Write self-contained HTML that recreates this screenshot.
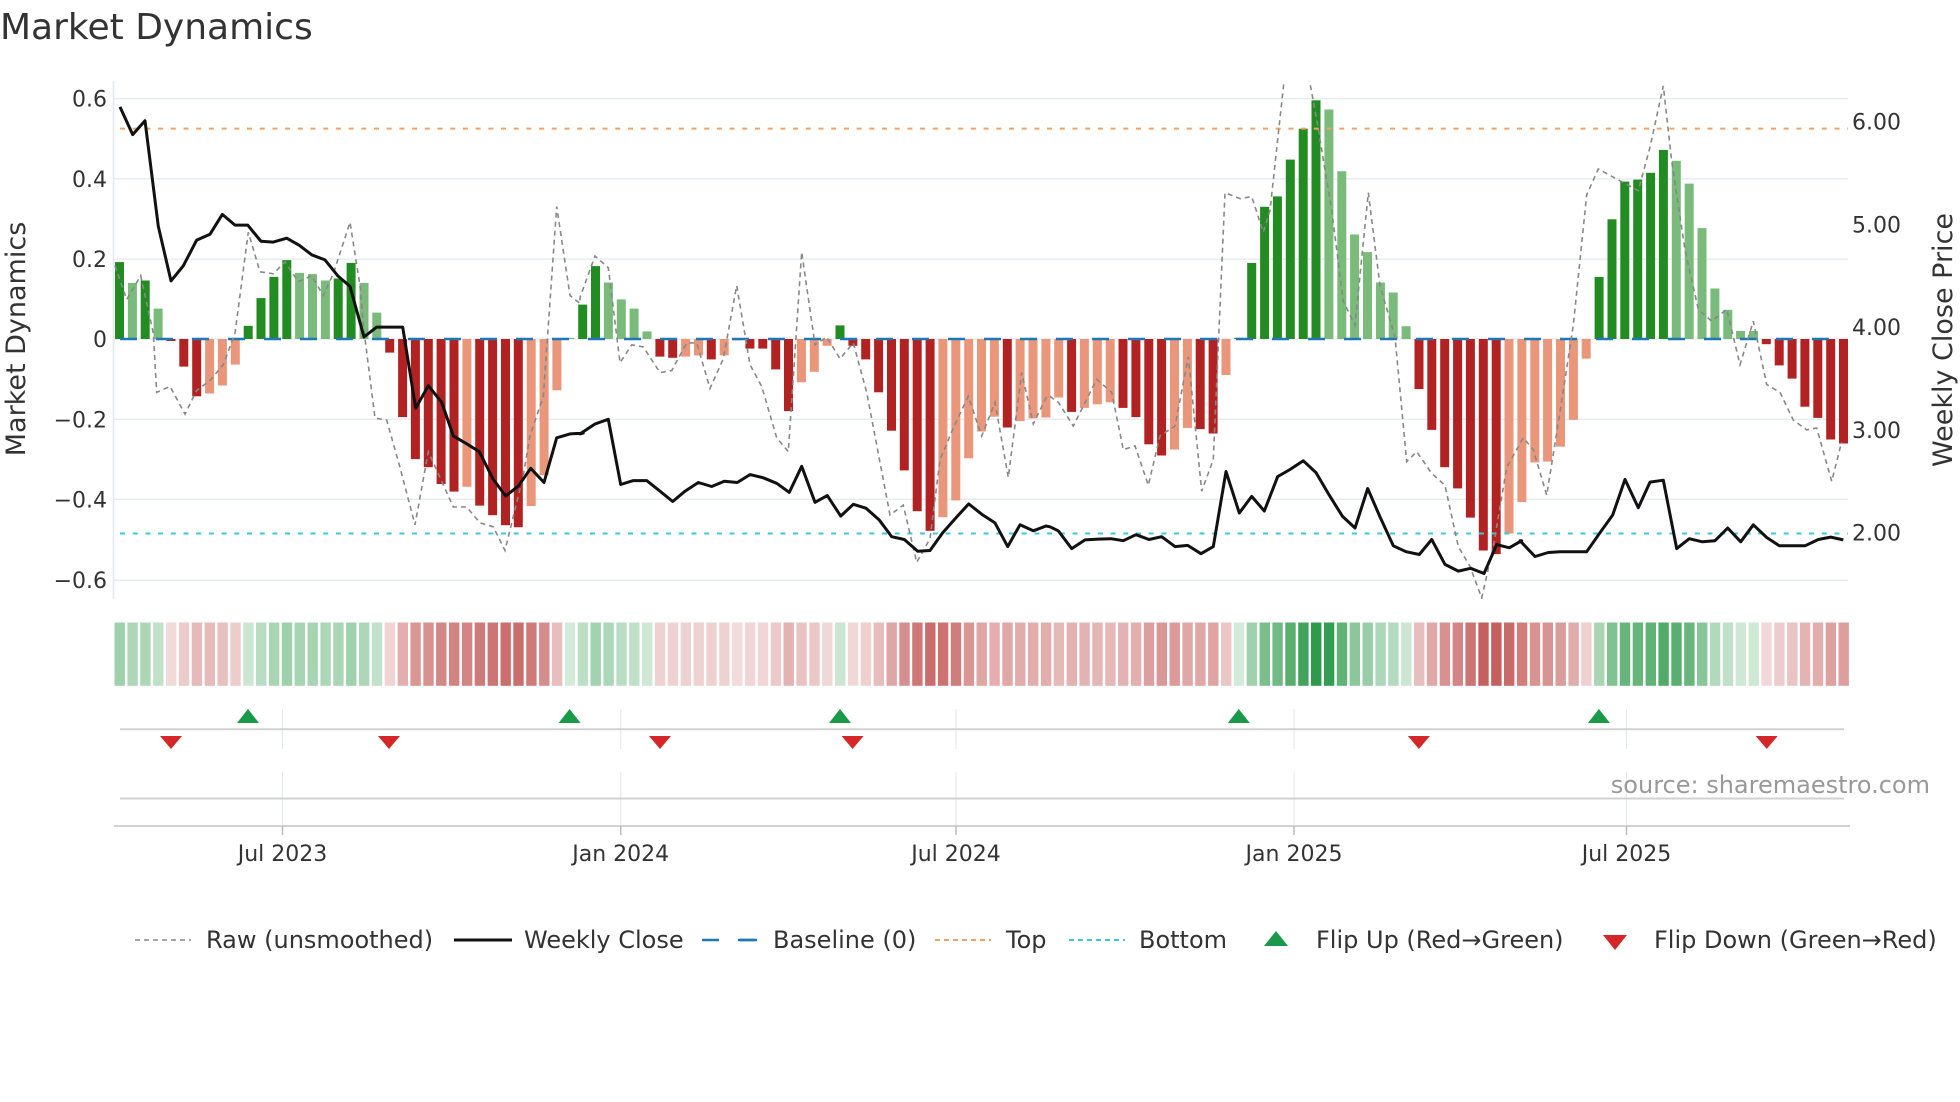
<!DOCTYPE html>
<html><head><meta charset="utf-8">
<style>
html,body{margin:0;padding:0;background:#fff;}
svg{display:block;font-family:"DejaVu Sans","Liberation Sans",sans-serif;}
</style></head>
<body>
<svg id="s" width="1960" height="1102" viewBox="0 0 1960 1102" xmlns="http://www.w3.org/2000/svg">
<rect width="1960" height="1102" fill="#fff"/>
<text x="0" y="39" font-size="36" fill="#333">Market Dynamics</text>
<g id="grid" stroke="#e8ecf2" stroke-width="1.5">
<line x1="113" y1="98.6" x2="1848" y2="98.6"/>
<line x1="113" y1="178.9" x2="1848" y2="178.9"/>
<line x1="113" y1="259.1" x2="1848" y2="259.1"/>
<line x1="113" y1="339" x2="1848" y2="339"/>
<line x1="113" y1="419.3" x2="1848" y2="419.3"/>
<line x1="113" y1="499.3" x2="1848" y2="499.3"/>
<line x1="113" y1="580.2" x2="1848" y2="580.2"/>
</g>
<line x1="113.5" y1="81" x2="113.5" y2="599" stroke="#e3e7ee" stroke-width="1.5"/>
<g font-size="22" fill="#333" text-anchor="end">
<text x="107" y="106.6">0.6</text>
<text x="107" y="186.9">0.4</text>
<text x="107" y="267.1">0.2</text>
<text x="107" y="347">0</text>
<text x="107" y="427.3">−0.2</text>
<text x="107" y="507.3">−0.4</text>
<text x="107" y="588.2">−0.6</text>
</g>
<g font-size="22" fill="#333">
<text x="1852" y="129.5">6.00</text>
<text x="1852" y="232.3">5.00</text>
<text x="1852" y="335">4.00</text>
<text x="1852" y="437.9">3.00</text>
<text x="1852" y="540.7">2.00</text>
</g>
<text transform="translate(25,339) rotate(-90)" text-anchor="middle" font-size="27" fill="#333">Market Dynamics</text>
<text transform="translate(1952,340) rotate(-90)" text-anchor="middle" font-size="27" fill="#333">Weekly Close Price</text>
<defs><clipPath id="cp"><rect x="113" y="81" width="1736" height="518"/></clipPath></defs>
<g id="bars"></g>
<line x1="120" y1="128.6" x2="1848" y2="128.6" stroke="#f4a261" stroke-width="2" stroke-dasharray="5,7.7"/>
<line x1="120" y1="533.5" x2="1848" y2="533.5" stroke="#3cc8dc" stroke-width="2" stroke-dasharray="5,7.7"/>
<line x1="120" y1="339" x2="1848" y2="339" stroke="#1f77b4" stroke-width="2.5" stroke-dasharray="17,19"/>
<g clip-path="url(#cp)">
<polyline id="raw" fill="none" stroke="#888" stroke-width="1.6" stroke-dasharray="5,4"/>
<polyline id="close" fill="none" stroke="#111" stroke-width="3" stroke-linejoin="round"/>
</g>
<g id="heat"></g>
<g stroke="#e6e9ef" stroke-width="1.2">
<line x1="282.5" y1="709" x2="282.5" y2="749"/><line x1="620.7" y1="709" x2="620.7" y2="749"/><line x1="956" y1="709" x2="956" y2="749"/><line x1="1294" y1="709" x2="1294" y2="749"/><line x1="1626.5" y1="709" x2="1626.5" y2="749"/>
<line x1="282.5" y1="772" x2="282.5" y2="826"/><line x1="620.7" y1="772" x2="620.7" y2="826"/><line x1="956" y1="772" x2="956" y2="826"/><line x1="1294" y1="772" x2="1294" y2="826"/><line x1="1626.5" y1="772" x2="1626.5" y2="826"/>
</g>
<line x1="120" y1="729.3" x2="1844" y2="729.3" stroke="#d2d2d2" stroke-width="2"/>
<line x1="120" y1="798.5" x2="1844" y2="798.5" stroke="#d2d2d2" stroke-width="2"/>
<line x1="114" y1="826" x2="1850" y2="826" stroke="#d2d2d2" stroke-width="2"/>
<g stroke="#bbb" stroke-width="1.5">
<line x1="282.5" y1="826" x2="282.5" y2="835"/><line x1="620.7" y1="826" x2="620.7" y2="835"/><line x1="956" y1="826" x2="956" y2="835"/><line x1="1294" y1="826" x2="1294" y2="835"/><line x1="1626.5" y1="826" x2="1626.5" y2="835"/>
</g>
<g id="marks"></g>
<g font-size="22" fill="#333" text-anchor="middle">
<text x="282.5" y="861">Jul 2023</text>
<text x="620.7" y="861">Jan 2024</text>
<text x="956" y="861">Jul 2024</text>
<text x="1294" y="861">Jan 2025</text>
<text x="1626.5" y="861">Jul 2025</text>
</g>
<text x="1930" y="793" text-anchor="end" font-size="24" fill="#999">source: sharemaestro.com</text>
<g font-size="24" fill="#333">
<line x1="135" y1="940" x2="191" y2="940" stroke="#888" stroke-width="1.6" stroke-dasharray="5,4"/>
<text x="206" y="948">Raw (unsmoothed)</text>
<line x1="454" y1="940" x2="512" y2="940" stroke="#111" stroke-width="3"/>
<text x="524" y="948">Weekly Close</text>
<line x1="702" y1="940" x2="757" y2="940" stroke="#1f77b4" stroke-width="2.5" stroke-dasharray="17,19"/>
<line x1="740" y1="940" x2="757" y2="940" stroke="#1f77b4" stroke-width="2.5"/>
<text x="773" y="948">Baseline (0)</text>
<line x1="935" y1="940" x2="991" y2="940" stroke="#f4a261" stroke-width="2" stroke-dasharray="5,4"/>
<text x="1006" y="948">Top</text>
<line x1="1069" y1="940" x2="1125" y2="940" stroke="#3cc8dc" stroke-width="2" stroke-dasharray="5,4"/>
<text x="1139" y="948">Bottom</text>
<polygon points="1264,946 1288,946 1276,931" fill="#1a9a48"/>
<text x="1316" y="948">Flip Up (Red→Green)</text>
<polygon points="1603,935 1627,935 1615,950" fill="#d62728"/>
<text x="1654" y="948">Flip Down (Green→Red)</text>
</g>
</svg>
<script>
(function(){
var NS="http://www.w3.org/2000/svg";
function el(t,a,p){var e=document.createElementNS(NS,t);for(var k in a)e.setAttribute(k,a[k]);p.appendChild(e);return e;}
var V=[0.192,0.14,0.146,0.076,-0.005,-0.069,-0.143,-0.136,-0.116,-0.064,0.033,0.102,0.155,0.197,0.165,0.162,0.146,0.151,0.19,0.14,0.066,-0.034,-0.195,-0.30,-0.32,-0.362,-0.381,-0.369,-0.416,-0.44,-0.465,-0.47,-0.417,-0.34,-0.128,0.003,0.086,
0.182,0.141,0.099,0.076,0.019,-0.044,-0.047,-0.044,-0.041,-0.051,-0.041,-0.003,-0.024,-0.024,-0.076,-0.18,-0.108,-0.082,-0.017,0.034,-0.017,-0.051,-0.133,-0.229,-0.328,-0.43,-0.479,-0.445,-0.403,-0.298,-0.231,-0.194,-0.221,-0.205,-0.198,-0.196,-0.146,
-0.182,-0.172,-0.163,-0.158,-0.172,-0.195,-0.263,-0.291,-0.276,-0.222,-0.225,-0.236,-0.09,0.003,0.19,0.33,0.356,0.448,0.525,0.596,0.573,0.419,0.261,0.217,0.141,0.116,0.032,-0.125,-0.227,-0.32,-0.373,-0.446,-0.528,-0.537,-0.486,-0.407,
-0.308,-0.306,-0.269,-0.202,-0.049,0.155,0.299,0.393,0.398,0.415,0.472,0.445,0.388,0.277,0.126,0.073,0.02,0.02,-0.013,-0.066,-0.099,-0.169,-0.197,-0.251,-0.261];
var C="DLDLRRRSSSDDDDLLLDDLLRRRRRRSRRRRSSSLDDLLLLRRSSRSRRRRRSSSDRRRRRRRSSSSSRSSSSRSSSRRRRSSRRSDDDDDDDLLLLLLLRRRRRRRSSSSSSSDDDDDDLLLLLLLRRRRRRR";
var col={D:"#228b22",L:"#7aba7a",R:"#b22222",S:"#e9967a"};
var bars=document.getElementById("bars"),heat=document.getElementById("heat");
for(var i=0;i<V.length;i++){
 var x=115+12.866*i,v=V[i],y0=339,y=339-v*400.5;
 var c=C[i]||(v>=0?"D":"R");
 if(v>=0&&(c=="R"||c=="S"))c="D"; if(v<0&&(c=="D"||c=="L"))c="R";
 el("rect",{x:x.toFixed(1),y:Math.min(y,y0).toFixed(1),width:9,height:Math.max(Math.abs(y-y0),0.5).toFixed(1),fill:col[c]},bars);
 var t=Math.min(1,0.2+0.8*Math.abs(v)/0.6),r,g,b;
 if(v>=0){r=255-t*(255-46);g=255-t*(255-154);b=255-t*(255-75);}else{r=255-t*(255-192);g=255-t*(255-80);b=255-t*(255-79);}
 el("rect",{x:(x-0.5).toFixed(1),y:622.5,width:10.4,height:63.3,fill:"rgb("+(r|0)+","+(g|0)+","+(b|0)+")"},heat);
}
function conv(list,x0){var o=[];for(var k=0;k<list.length;k+=2)o.push((x0+list[k]/3).toFixed(1)+","+(80+list[k+1]/2.529).toFixed(1));return o;}
var raw=[].concat(
conv([15,470,50,555,92,495,130,640,140,790,180,775,225,845,260,785,300,760,340,720,375,640,415,385,450,485,490,490,525,460,565,510,605,495,640,545,670,490,720,360,750,520,760,620,795,855,830,860,870,980,915,1125,955,940,1030,1080,1070,1080,1110,1120,1150,1130,1185,1190,1240,1000,1260,900,1300,800,1340,320,1380,545,1410,565],110),
conv([0,550,45,445,85,475,120,715,155,670,190,675,240,740,275,735,320,665,350,665,390,780,430,705,470,520,510,720,545,775,590,905,625,940,665,435,705,670,740,650,780,705,820,665,860,790,930,1100,970,1075,1010,1220,1050,1160,1080,960,1120,880,1165,800,1205,900,1245,815,1285,1005,1325,740,1360,870,1400,800],580),
conv([0,800,25,815,70,875,140,757,185,790,220,935,255,925,295,1025,330,900,375,875,415,700,455,1040,490,960,525,285,570,300,605,295,640,385,660,330,710,-60,765,-60,800,100,845,330,880,560,915,620,955,285,990,520,1035,650,1070,965,1100,940,1145,995,1185,1025,1225,1180,1260,1230,1295,1310,1330,1180,1370,980,1420,905],1050),
conv([40,935,80,1050,120,840,160,620,200,290,235,225,300,255,355,280,390,170,430,15,455,205,495,430,535,580,575,610,620,580,660,720,700,610,740,770,780,790,820,860,860,885,890,880,935,1015,965,915],1520));
document.getElementById("raw").setAttribute("points",raw.join(" "));
var cl=[].concat(
conv([30,68,68,138,105,103,145,370,183,508,220,470,260,405,300,390,337,340,375,367,413,367,453,408,490,410,530,400,568,418,605,442,645,455,683,495,720,522,762,650,800,625,878,625,917,830,955,773,995,815,1030,900,1070,920,1108,940,1150,1010,1187,1052,1225,1027,1262,982,1302,1018,1340,905,1380,895,1420,893],110),
conv([0,895,45,870,85,858,122,1023,160,1013,200,1013,240,1040,278,1066,315,1040,355,1018,395,1028,433,1015,472,1018,510,998,550,1006,590,1020,628,1043,665,977,705,1068,742,1051,782,1103,820,1073,858,1083,897,1112,935,1155,973,1162,1013,1192,1050,1190,1088,1145,1128,1107,1166,1072,1205,1098,1245,1120,1283,1180,1320,1125,1360,1140,1398,1128],580),
conv([0,1130,25,1140,65,1185,105,1163,145,1161,183,1160,220,1165,258,1150,297,1162,335,1155,375,1180,413,1177,453,1198,490,1180,528,990,568,1095,605,1053,643,1090,683,1003,720,985,760,963,798,993,838,1050,877,1103,915,1133,953,1033,990,1105,1030,1178,1068,1193,1108,1200,1145,1162,1185,1225,1225,1242,1262,1235,1302,1248,1340,1175,1378,1183,1415,1165],1050),
conv([0,1165,45,1205,85,1195,120,1193,160,1193,200,1193,240,1145,278,1100,315,1010,355,1082,390,1017,430,1012,470,1185,508,1160,547,1168,585,1165,623,1133,662,1168,700,1125,740,1157,778,1178,855,1178,895,1162,932,1156,970,1163],1520));
document.getElementById("close").setAttribute("points",cl.join(" "));
var m=document.getElementById("marks");
[248,569.6,840,1238.8,1598.9].forEach(function(x){el("polygon",{points:(x-11)+",723 "+(x+11)+",723 "+x+",709",fill:"#1a9a48"},m);});
[171,389,660,852.6,1418.9,1766.7].forEach(function(x){el("polygon",{points:(x-11)+",736 "+(x+11)+",736 "+x+",749",fill:"#d62728"},m);});
})();
</script>
</body></html>
